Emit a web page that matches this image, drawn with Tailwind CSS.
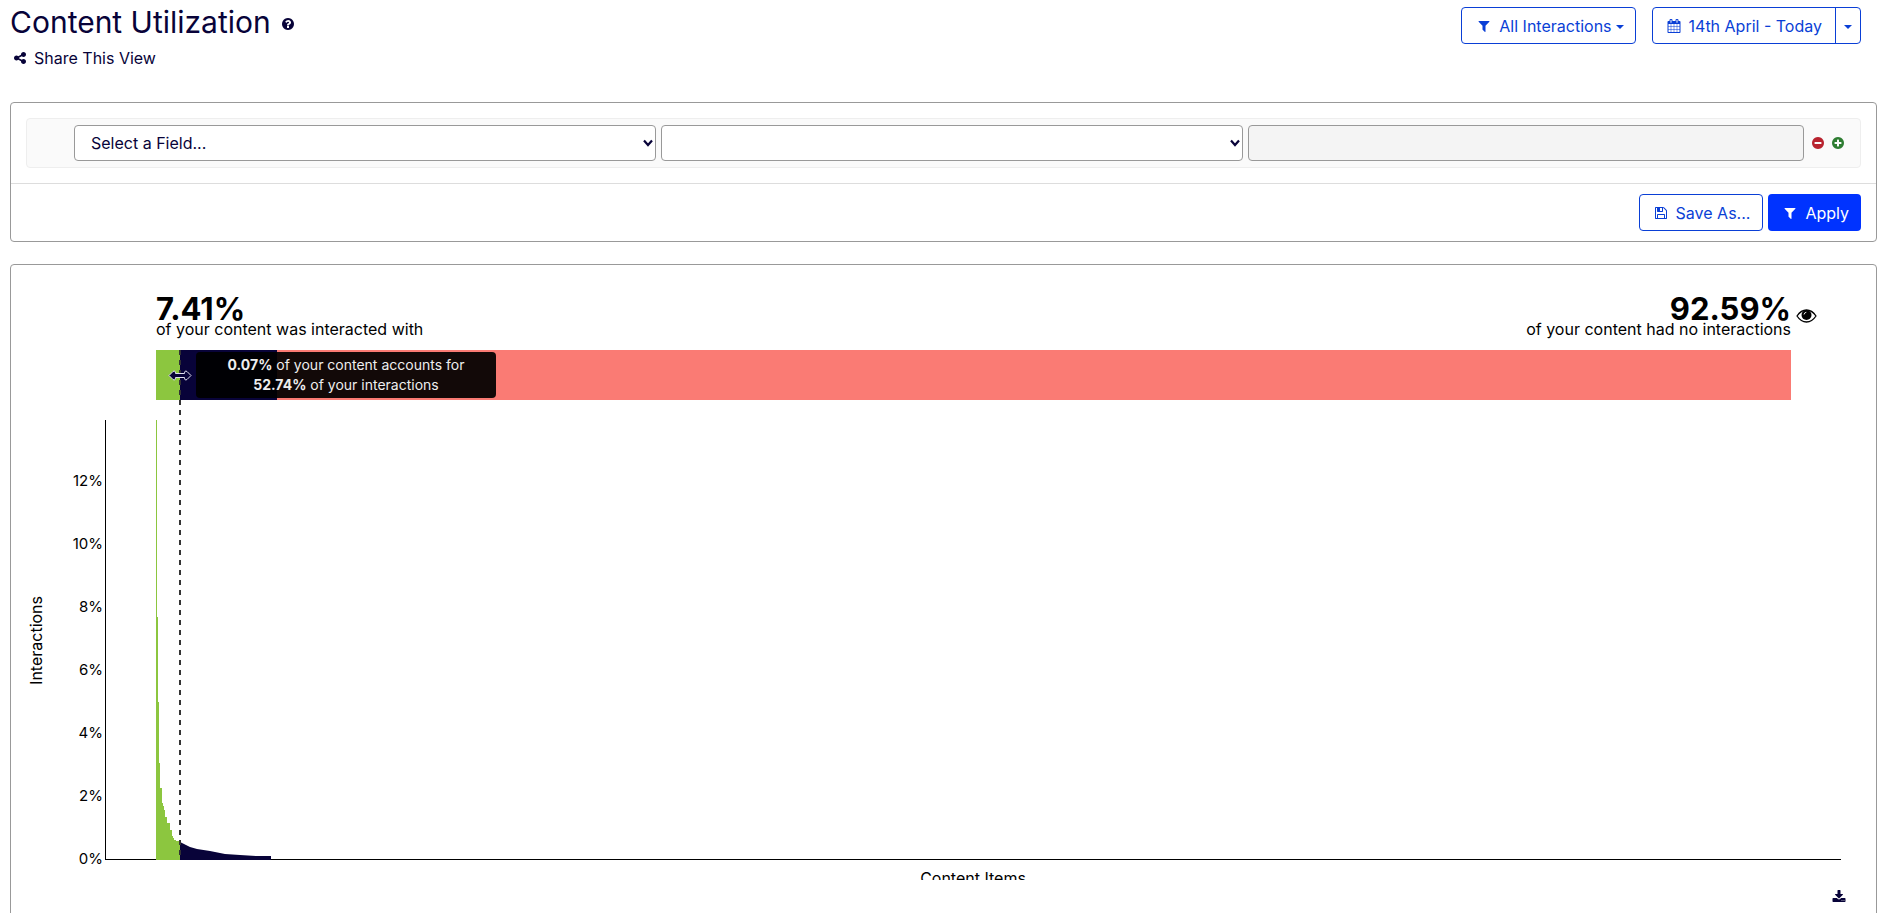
<!DOCTYPE html>
<html lang="en">
<head>
    <meta charset="UTF-8">
    <meta name="viewport" content="width=device-width, initial-scale=1.0">
    <title>Content Utilization</title>
    <script src="https://cdn.jsdelivr.net/npm/@tailwindcss/browser@4"></script>
</head>
<body class="bg-white font-['Inter',sans-serif] text-base text-[#080339] h-screen overflow-hidden">
    <!-- Icon sprite -->
    <svg class="hidden">
        <symbol id="filter" viewBox="0 0 1792 1792"><path d="M1595 295q17 41-14 70l-493 493v742q0 42-39 59-13 5-25 5-27 0-45-19l-256-256q-19-19-19-45v-486l-493-493q-31-29-14-70 17-39 59-39h1280q42 0 59 39z"/></symbol>
        <symbol id="calendar" viewBox="0 0 1792 1792"><path d="M192 1664h288v-288h-288v288zm352 0h320v-288h-320v288zm-352-352h288v-320h-288v320zm352 0h320v-320h-320v320zm-352-384h288v-288h-288v288zm736 736h320v-288h-320v288zm-384-736h320v-288h-320v288zm768 736h288v-288h-288v288zm-384-352h320v-320h-320v320zm-352-864v-288q0-13-9.500-22.500t-22.500-9.500h-64q-13 0-22.500 9.500t-9.500 22.500v288q0 13 9.500 22.500t22.500 9.500h64q13 0 22.500-9.500t9.500-22.500zm736 864h288v-320h-288v320zm-384-384h320v-288h-320v288zm384 0h288v-288h-288v288zm32-480v-288q0-13-9.500-22.500t-22.500-9.500h-64q-13 0-22.500 9.500t-9.500 22.500v288q0 13 9.500 22.500t22.500 9.500h64q13 0 22.500-9.500t9.500-22.500zm384-64v1280q0 52-38 90t-90 38h-1408q-52 0-90-38t-38-90v-1280q0-52 38-90t90-38h128v-96q0-66 47-113t113-47h64q66 0 113 47t47 113v96h384v-96q0-66 47-113t113-47h64q66 0 113 47t47 113v96h128q52 0 90 38t38 90z"/></symbol>
        <symbol id="save" viewBox="0 0 1792 1792"><path d="M512 1536h768v-384h-768v384zm896 0h128v-896q0-14-10-38.500t-20-34.500l-281-281q-10-10-34-20t-39-10v416q0 40-28 68t-68 28h-576q-40 0-68-28t-28-68v-416h-128v1280h128v-416q0-40 28-68t68-28h832q40 0 68 28t28 68v416zm-384-928v-320q0-13-9.500-22.500t-22.500-9.500h-192q-13 0-22.500 9.500t-9.500 22.500v320q0 13 9.500 22.500t22.500 9.500h192q13 0 22.500-9.500t9.500-22.500zm640 32v928q0 40-28 68t-68 28h-1344q-40 0-68-28t-28-68v-1344q0-40 28-68t68-28h928q40 0 88 20t76 48l280 280q28 28 48 76t20 88z"/></symbol>
        <symbol id="share" viewBox="0 0 1792 1792"><path d="M1344 1024q133 0 226.500 93.500t93.500 226.500-93.500 226.500-226.500 93.500-226.500-93.500-93.500-226.500q0-12 2-34l-360-180q-92 86-218 86-133 0-226.500-93.500t-93.500-226.500 93.500-226.500 226.500-93.500q126 0 218 86l360-180q-2-22-2-34 0-133 93.500-226.500t226.500-93.500 226.500 93.500 93.500 226.500-93.500 226.500-226.500 93.500q-126 0-218-86l-360 180q2 22 2 34t-2 34l360 180q92-86 218-86z"/></symbol>
        <symbol id="question" viewBox="0 0 1792 1792"><path d="M1024 1376v-192q0-14-9-23t-23-9h-192q-14 0-23 9t-9 23v192q0 14 9 23t23 9h192q14 0 23-9t9-23zm256-672q0-88-55.500-163t-138.500-116-170-41q-243 0-371 213-15 24 8 42l132 100q7 6 19 6 16 0 25-12 53-68 86-92 34-24 86-24 48 0 85.500 26t37.500 59q0 38-20 61t-68 45q-63 28-115.500 86.500t-52.500 125.500v36q0 14 9 23t23 9h192q14 0 23-9t9-23q0-19 21.500-49.500t54.500-49.500q32-18 49-28.500t46-35 44.500-48 28-60.500 12.500-81zm384 192q0 209-103 385.500t-279.500 279.500-385.500 103-385.500-103-279.500-279.500-103-385.500 103-385.500 279.500-279.500 385.500-103 385.500 103 279.500 279.500 103 385.500z"/></symbol>
        <symbol id="minus" viewBox="0 0 1792 1792"><path d="M1344 960v-128q0-26-19-45t-45-19h-768q-26 0-45 19t-19 45v128q0 26 19 45t45 19h768q26 0 45-19t19-45zm320-64q0 209-103 385.500t-279.500 279.500-385.500 103-385.500-103-279.500-279.500-103-385.500 103-385.500 279.500-279.500 385.500-103 385.500 103 279.500 279.500 103 385.500z"/></symbol>
        <symbol id="plus" viewBox="0 0 1792 1792"><path d="M1344 960v-128q0-26-19-45t-45-19h-256v-256q0-26-19-45t-45-19h-128q-26 0-45 19t-19 45v256h-256q-26 0-45 19t-19 45v128q0 26 19 45t45 19h256v256q0 26 19 45t45 19h128q26 0 45-19t19-45v-256h256q26 0 45-19t19-45zm320-64q0 209-103 385.500t-279.500 279.500-385.500 103-385.500-103-279.500-279.500-103-385.500 103-385.500 279.500-279.500 385.500-103 385.500 103 279.500 279.500 103 385.500z"/></symbol>
        <symbol id="eye" viewBox="0 0 21 14"><path d="M1 7Q5 1 10.500 1T20 7Q16 13 10.500 13T1 7z" fill="none" stroke="currentColor" stroke-width="1.300"/><circle cx="10.500" cy="6" r="5"/><path d="M8 5.500Q8.300 3.500 10.300 3.300" fill="none" stroke="#fff" stroke-width="0.900"/></symbol>
        <symbol id="download" viewBox="0 0 1792 1792"><path d="M1344 1344q0-26-19-45t-45-19-45 19-19 45 19 45 45 19 45-19 19-45zm256 0q0-26-19-45t-45-19-45 19-19 45 19 45 45 19 45-19 19-45zm128-224v320q0 40-28 68t-68 28h-1472q-40 0-68-28t-28-68v-320q0-40 28-68t68-28h465l135 136q58 56 136 56t136-56l136-136h464q40 0 68 28t28 68zm-325-569q17 41-14 70l-448 448q-18 19-45 19t-45-19l-448-448q-31-29-14-70 17-39 59-39h256v-448q0-26 19-45t45-19h256q26 0 45 19t19 45v448h256q42 0 59 39z"/></symbol>
        <symbol id="caret" viewBox="0 0 8 4"><path d="M0 0h8L4 4z"/></symbol>
        <symbol id="chevron" viewBox="0 0 10 8"><path d="M1 1.500L5 6l4-4.500" fill="none" stroke="currentColor" stroke-width="2.200"/></symbol>
    </svg>

    <header class="flex justify-between items-start pl-[10px] pr-6">
        <div>
            <div class="flex items-center gap-[10px] pt-1">
                <h1 class="text-[30px] leading-9">Content Utilization</h1>
                <button type="button" aria-label="Help" class="mt-1"><svg class="size-[14px] fill-current"><use href="#question"/></svg></button>
            </div>
            <a href="#" class="mt-[6px] ml-[3px] flex items-center gap-[7px]">
                <svg class="size-[14px] fill-current"><use href="#share"/></svg>
                Share This View
            </a>
        </div>
        <div class="flex gap-4 pt-[7px] text-[#0a3fd6]">
            <button type="button" class="h-[37px] pl-[15px] pr-[11px] flex items-center border border-[#0a3fd6] rounded">
                <svg class="size-[14px] mr-2 fill-current"><use href="#filter"/></svg>
                All Interactions
                <svg class="w-2 h-1 ml-1 mt-[2px] fill-current"><use href="#caret"/></svg>
            </button>
            <div class="flex h-[37px] border border-[#0a3fd6] rounded">
                <button type="button" class="pl-[14px] pr-[13px] flex items-center">
                    <svg class="size-[14px] mr-2 fill-current"><use href="#calendar"/></svg>
                    14th April - Today
                </button>
                <button type="button" aria-label="Choose dates" class="w-[25px] flex items-center justify-center border-l border-[#0a3fd6]">
                    <svg class="w-2 h-1 mt-[2px] fill-current"><use href="#caret"/></svg>
                </button>
            </div>
        </div>
    </header>

    <main class="pl-[10px] pr-2">
        <!-- Filter builder -->
        <form class="mt-8 border border-[#999] rounded">
            <div class="m-[15px] pl-[47px] pr-[15px] py-[6px] flex items-center bg-[#fafafa] border border-[#eee] rounded">
                <div class="relative flex-[582]">
                    <select aria-label="Field" class="appearance-none w-full h-9 px-4 bg-white border border-[#999] rounded">
                        <option>Select a Field...</option>
                    </select>
                    <svg class="absolute right-[3px] top-[14px] w-[10px] h-2 pointer-events-none"><use href="#chevron"/></svg>
                </div>
                <div class="relative flex-[582] ml-[5px]">
                    <select aria-label="Operator" class="appearance-none w-full h-9 px-4 bg-white border border-[#999] rounded">
                        <option></option>
                    </select>
                    <svg class="absolute right-[3px] top-[14px] w-[10px] h-2 pointer-events-none"><use href="#chevron"/></svg>
                </div>
                <input type="text" aria-label="Value" disabled class="flex-[530] min-w-0 h-9 ml-[5px] px-3 bg-[#f4f4f4] border border-[#999] rounded">
                <button type="button" aria-label="Remove filter" class="ml-[7px]"><svg class="size-[14px] fill-[#b8232f]"><use href="#minus"/></svg></button>
                <button type="button" aria-label="Add filter" class="ml-[6px]"><svg class="size-[14px] fill-[#2e7d32]"><use href="#plus"/></svg></button>
            </div>
            <div class="flex justify-end gap-[5px] py-[10px] pr-[15px] border-t border-[#ddd]">
                <button type="button" class="h-[37px] pl-[14px] pr-3 flex items-center border border-[#0a3fd6] rounded text-[#0a3fd6]">
                    <svg class="size-[14px] mr-2 fill-current"><use href="#save"/></svg>
                    Save As...
                </button>
                <button type="submit" class="h-[37px] pl-[15px] pr-3 flex items-center bg-[#0033ff] rounded text-white">
                    <svg class="size-[14px] mr-2 fill-current"><use href="#filter"/></svg>
                    Apply
                </button>
            </div>
        </form>

        <!-- Utilization chart -->
        <section class="mt-[22px] pt-8 pb-6 border border-[#999] rounded text-black">
            <div class="pl-[145px] pr-[85px]">
                <div class="flex justify-between">
                    <div>
                        <p class="text-[31px] leading-6 font-bold">7.41%</p>
                        <p class="leading-4">of your content was interacted with</p>
                    </div>
                    <div class="relative text-right">
                        <p class="text-[31px] leading-6 font-bold">92.59%</p>
                        <p class="leading-4">of your content had no interactions</p>
                        <button type="button" aria-label="Show content" class="absolute left-full top-3 ml-[5px]"><svg class="w-[21px] h-[14px]"><use href="#eye"/></svg></button>
                    </div>
                </div>
                <div class="relative mt-[13px] flex h-[50px] bg-[#fa7b74]">
                    <div class="w-6 bg-[#8cc63f]"></div>
                    <div class="w-[97px] bg-[#080339]"></div>
                    <!-- Drag handle and its guide line -->
                    <svg class="absolute left-[23px] top-0 z-10 w-[2px] h-[508px]"><path d="M1 0V508" stroke="#333" stroke-width="2" stroke-dasharray="5 5"/></svg>
                    <svg class="absolute left-3 top-5 z-20 w-6 h-[11px]" viewBox="0 0 24 11">
                        <path d="M1 5.500L5 1.500Q7.500 0 7.500 3.500H16.500Q16.500 0 19 1.500L23 5.500L19 9.500Q16.500 11 16.500 7.500H7.500Q7.500 11 5 9.500z" fill="#080339" stroke="#dde" stroke-width="1"/>
                    </svg>
                    <div class="absolute left-10 top-[2px] w-[300px] h-[46px] px-4 py-[3px] bg-black/93 rounded text-center text-sm leading-5 text-[#eee]">
                        <b>0.07%</b> of your content accounts for<br><b>52.74%</b> of your interactions
                    </div>
                </div>
            </div>

            <div class="mt-5 pr-[35px] flex">
                <div class="w-[50px] flex items-center justify-center"><span class="[writing-mode:vertical-rl] rotate-180">Interactions</span></div>
                <div class="w-11 pr-[2px] self-end -mb-[11px] text-[15px] leading-6">
                    <div class="h-[63px] flex items-end justify-end">12%</div>
                    <div class="h-[63px] flex items-end justify-end">10%</div>
                    <div class="h-[63px] flex items-end justify-end">8%</div>
                    <div class="h-[63px] flex items-end justify-end">6%</div>
                    <div class="h-[63px] flex items-end justify-end">4%</div>
                    <div class="h-[63px] flex items-end justify-end">2%</div>
                    <div class="h-[63px] flex items-end justify-end">0%</div>
                </div>
                <div class="flex-1 h-[440px] pl-[50px] border-l border-b border-black">
                    <svg class="w-[122px] h-[439px] overflow-visible" shape-rendering="crispEdges">
                        <path fill="#8cc63f" d="M0 440V0H1V197H2V282H3V343H4V368H6V383H7V386H8V390H9V397H11V403H14V410H16V416H17V418H18V420H20V421H24V440z"/>
                        <path fill="#080339" shape-rendering="auto" d="M24 440V422L28 424L34 427L41 429L54 431L69 434L84 435L100 436L115 436V440z"/>
                    </svg>
                </div>
            </div>
            <div class="pl-[94px] pr-[35px]"><p class="h-5 pt-[6px] overflow-hidden text-center">Content Items</p></div>
            <div class="flex justify-end pr-[30px] pt-[10px]">
                <button type="button" aria-label="Download" class="text-[#080339]"><svg class="size-[14px] fill-current"><use href="#download"/></svg></button>
            </div>
        </section>
    </main>
</body>
</html>
